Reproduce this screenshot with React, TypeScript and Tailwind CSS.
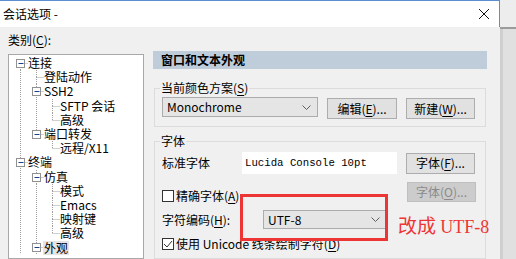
import { ReactNode } from "react";

type Node = {
  label: string;
  level: number;
  box?: boolean;
  last?: boolean;
  first?: boolean;
  guides: boolean[];
  selected?: boolean;
};

const tree: Node[] = [
  { label: "连接", level: 1, box: true, first: true, guides: [] },
  { label: "登陆动作", level: 2, guides: [true] },
  { label: "SSH2", level: 2, box: true, guides: [true] },
  { label: "SFTP 会话", level: 3, guides: [true, true] },
  { label: "高级", level: 3, last: true, guides: [true, true] },
  { label: "端口转发", level: 2, box: true, last: true, guides: [true] },
  { label: "远程/X11", level: 3, last: true, guides: [true, false] },
  { label: "终端", level: 1, box: true, guides: [] },
  { label: "仿真", level: 2, box: true, guides: [true] },
  { label: "模式", level: 3, guides: [true, true] },
  { label: "Emacs", level: 3, guides: [true, true] },
  { label: "映射键", level: 3, guides: [true, true] },
  { label: "高级", level: 3, last: true, guides: [true, true] },
  { label: "外观", level: 2, box: true, guides: [true], selected: true },
];

const ROW = 14.2;
const CY = 7;

const TreeRow = ({ node }: { node: Node }) => {
  const w = node.level * 16;
  const cx = (node.level - 1) * 16 + 8.5;
  return (
    <div className="flex items-center h-[14.2px]">
      <svg width={w} height={ROW} className="shrink-0">
        <g stroke="#a0a0a0" strokeWidth="1" strokeDasharray="1 1">
          {node.guides.map((g, i) =>
            g ? <line key={i} x1={i * 16 + 8.5} y1={0} x2={i * 16 + 8.5} y2={ROW} /> : null
          )}
          {!node.first && <line x1={cx} y1={0} x2={cx} y2={CY} />}
          {!node.last && <line x1={cx} y1={CY} x2={cx} y2={ROW} />}
          <line x1={cx} y1={CY + 0.5} x2={w} y2={CY + 0.5} />
        </g>
        {node.box && (
          <g>
            <rect x={cx - 4} y={CY - 3.5} width="8" height="8" fill="#fff" stroke="#919191" />
            <line x1={cx - 2} y1={CY + 0.5} x2={cx + 3} y2={CY + 0.5} stroke="#1e3f8a" />
          </g>
        )}
      </svg>
      <span
        className={
          "leading-[14px] whitespace-nowrap " +
          (node.selected ? "bg-[#e5e5e5] px-[1px] -ml-[1px]" : "")
        }
      >
        {node.label}
      </span>
    </div>
  );
};

const Btn = ({ children, disabled, className }: { children: ReactNode; disabled?: boolean; className?: string }) => (
  <div
    className={
      "flex items-center justify-center border text-[12px] leading-none " +
      (disabled
        ? "bg-[#cccccc] border-[#bfbfbf] text-[#8a8a8a] "
        : "bg-[#e1e1e1] border-[#adadad] text-black ") +
      (className ?? "")
    }
  >
    {children}
  </div>
);

const Chevron = () => (
  <svg width="9" height="5" viewBox="0 0 9 5" className="shrink-0">
    <path d="M0.5 0.5 L4.5 4.5 L8.5 0.5" fill="none" stroke="#606060" strokeWidth="1" />
  </svg>
);

const Check = ({ checked }: { checked?: boolean }) => (
  <div className="w-[12px] h-[12px] bg-white border border-[#333] flex items-center justify-center shrink-0">
    {checked && (
      <svg width="10" height="10" viewBox="0 0 10 10">
        <path d="M1 5 L4 8 L9 2" fill="none" stroke="#333" strokeWidth="1" />
      </svg>
    )}
  </div>
);

const U = ({ c }: { c: string }) => <span className="underline underline-offset-2">{c}</span>;

export default function App() {
  return (
    <div className="w-[516px] h-[259px] overflow-hidden flex relative bg-[#e2e2e2] text-black text-[12px] font-['Noto_Sans_CJK_SC','Noto_Sans',sans-serif]">
      {/* dialog */}
      <div className="w-[500px] shrink-0 flex flex-col">
        <div className="h-[27px] shrink-0 bg-white border-t border-r border-[#5b8fd0] flex items-center justify-between pl-[3px] pr-[10px]">
          <span className="text-[12px]">会话选项 -</span>
          <svg width="10" height="10" viewBox="0 0 10 10">
            <path d="M0 0 L10 10 M10 0 L0 10" stroke="#111" strokeWidth="1" />
          </svg>
        </div>

        <div className="flex-1 bg-[#f0f0f0] flex pl-[8px] pt-[5px] overflow-hidden">
          {/* category tree */}
          <div className="w-[136px] shrink-0 flex flex-col">
            <div className="h-[16px] leading-[16px]">
              类别(<U c="C" />):
            </div>
            <div className="mt-[6px] h-[220px] bg-white border border-[#a8a8a8] pl-[3px] pt-[1px]">
              {tree.map((n, i) => (
                <TreeRow key={i} node={n} />
              ))}
            </div>
          </div>

          {/* settings */}
          <div className="ml-[9px] w-[334px] shrink-0 pt-[19px] flex flex-col">
            <div className="h-[19px] bg-[#bfcddb] flex items-center pl-[8px] font-bold">窗口和文本外观</div>

            <fieldset className="mt-[11px] mx-[1px] border border-[#dcdcdc]">
              <legend className="ml-[5px] px-[1px] leading-[16px]">
                当前颜色方案(<U c="S" />)
              </legend>
              <div className="flex items-start pl-[7px] pt-[1px] pb-[7px]">
                <div className="w-[156px] h-[20px] bg-[#e5e5e5] border border-[#acacac] flex items-center justify-between pl-[4px] pr-[6px]">
                  <span>Monochrome</span>
                  <Chevron />
                </div>
                <Btn className="ml-[9px] mt-[1px] w-[70px] h-[21px]">
                  编辑(<U c="E" />)...
                </Btn>
                <Btn className="ml-[9px] mt-[1px] w-[69px] h-[21px]">
                  新建(<U c="W" />)...
                </Btn>
              </div>
            </fieldset>

            <fieldset className="mt-[6px] mx-[1px] border border-[#dcdcdc]">
              <legend className="ml-[5px] px-[1px] leading-[16px]">字体</legend>
              <div className="flex flex-col pl-[7px] pr-[9px] pb-[8px]">
                <div className="mt-[3px] h-[22px] flex items-center">
                  <span className="w-[80px] shrink-0">标准字体</span>
                  <div className="w-[155px] h-[22px] bg-white flex items-center pl-[3px] font-['Liberation_Mono',monospace] text-[10.7px]">
                    Lucida Console 10pt
                  </div>
                  <Btn className="ml-[9px] w-[69px] h-[21px]">
                    字体(<U c="F" />)...
                  </Btn>
                </div>

                <div className="mt-[8px] h-[20px] flex items-end justify-between">
                  <div className="flex items-center gap-[2px]">
                    <Check />
                    <span className="leading-[12px]">
                      精确字体(<U c="A" />)
                    </span>
                  </div>
                  <Btn disabled className="w-[69px] h-[20px]">
                    字体(<U c="O" />)...
                  </Btn>
                </div>

                <div className="mt-[8px] h-[19px] flex items-center">
                  <span className="w-[101px] shrink-0">
                    字符编码(<U c="H" />):
                  </span>
                  <div className="w-[124px] h-[19px] bg-[#e5e5e5] border border-[#acacac] flex items-center justify-between pl-[4px] pr-[6px]">
                    <span>UTF-8</span>
                    <Chevron />
                  </div>
                </div>

                <div className="mt-[9px] flex items-center gap-[2px]">
                  <Check checked />
                  <span className="leading-[12px]">
                    使用 Unicode 线条绘制字符(<U c="D" />)
                  </span>
                </div>
              </div>
            </fieldset>
          </div>
        </div>
      </div>

      {/* window behind */}
      <div className="flex-1 flex flex-col">
        <div className="h-[27px] bg-[#ededed]" />
        <div className="h-[2px] bg-[#9b9b9b]" />
        <div className="flex-1 bg-[#e0e0e0] border-l-[3px] border-[#cfcfcf]" />
      </div>

      {/* annotation */}
      <div className="absolute left-[240px] top-[194px] w-[148px] h-[47px] border-[3px] border-[#ee3535]" />
      <div className="absolute left-[398px] top-[212px] leading-[26px] text-[19px] text-[#ee3535] whitespace-nowrap">
        改成 <span className="font-['Liberation_Serif',serif] text-[18px]">UTF-8</span>
      </div>
    </div>
  );
}
